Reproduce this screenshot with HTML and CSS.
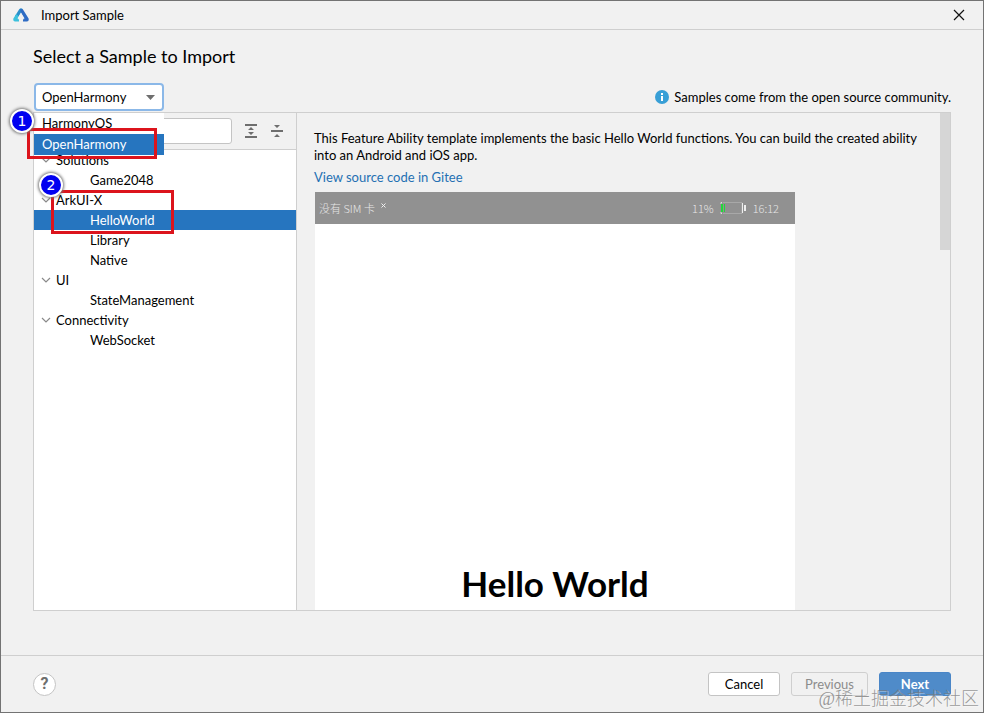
FILE: index.html
```html
<!DOCTYPE html>
<html lang="en">
<head>
<meta charset="utf-8">
<title>Import Sample</title>
<link rel="stylesheet" href="styles.css">
</head>
<body>
<div class="window">
  <header class="titlebar">
    <svg class="logo" width="16" height="14" viewBox="0 0 16 14" aria-hidden="true">
      <path d="M6.2 1.2Q8 -0.8 9.8 1.2L8 5L5.4 9L2 8Z" fill="#2a8fcb"/>
      <path d="M9.8 1.2L15.6 10.6Q16.2 13.4 14 13.6H10V11.2H11.2L8 5L7 1Z" fill="#2f6cc4"/>
      <path d="M0.4 10.6L3.2 6L6 8.4L4.8 11.2H6V13.6H2Q-0.2 13.4 0.4 10.6Z" fill="#3cc0dc"/>
      <path d="M8 4.4L11.6 10.6H9.4V13.6H6.6V10.6H4.4Z" fill="#f1f1f1"/>
    </svg>
    <span class="title">Import Sample</span>
    <button class="close" aria-label="Close">
      <svg width="12" height="12" viewBox="0 0 12 12"><path d="M1 1L11 11M11 1L1 11" stroke="#111" stroke-width="1.2" fill="none"/></svg>
    </button>
  </header>

  <main class="content">
    <h1>Select a Sample to Import</h1>
    <div class="filter">
      <div class="combo">
        <select aria-label="Platform">
          <option>HarmonyOS</option>
          <option selected>OpenHarmony</option>
        </select>
        <svg class="caret" width="9" height="5" viewBox="0 0 9 5"><path d="M0 0H9L4.5 5Z" fill="#6e6e6e"/></svg>
        <div class="popup">
          <ul role="listbox" aria-label="Platform">
            <li role="option">HarmonyOS</li>
            <li role="option" aria-selected="true" class="selected">OpenHarmony</li>
          </ul>
          <span class="mark mark-one"></span>
          <span class="badge badge-one">1</span>
        </div>
      </div>
      <p class="note">
        <svg width="14" height="14" viewBox="0 0 14 14" aria-hidden="true"><circle cx="7" cy="7" r="7" fill="#389fd6"/><rect x="6" y="3" width="2" height="2" fill="#fff"/><rect x="6" y="6" width="2" height="5" fill="#fff"/></svg>
        <span>Samples come from the open source community.</span>
      </p>
    </div>

    <div class="panes">
      <section class="sidebar">
        <div class="tools">
          <input class="search" type="text" aria-label="Search">
          <button aria-label="Expand all">
            <svg width="14" height="14" viewBox="0 0 14 14"><path d="M1 0H13V2H1ZM1 12H13V14H1ZM7 3L10 6H4ZM7 11L4 8H10Z" fill="#6e6e6e"/></svg>
          </button>
          <button aria-label="Collapse all">
            <svg width="14" height="14" viewBox="0 0 14 14"><path d="M1 6H13V8H1ZM4 1H10L7 4ZM4 13H10L7 10Z" fill="#6e6e6e"/></svg>
          </button>
        </div>
        <ul class="tree" role="tree">
          <li class="group" role="treeitem"><svg width="10" height="6" viewBox="0 0 10 6"><path d="M1 1L5 5L9 1"/></svg>Solutions</li>
          <li class="leaf" role="treeitem">Game2048</li>
          <li class="group" role="treeitem"><svg width="10" height="6" viewBox="0 0 10 6"><path d="M1 1L5 5L9 1"/></svg>ArkUI-X</li>
          <li class="leaf selected" role="treeitem" aria-selected="true">HelloWorld<span class="mark mark-two"></span><span class="badge badge-two">2</span></li>
          <li class="leaf" role="treeitem">Library</li>
          <li class="leaf" role="treeitem">Native</li>
          <li class="group" role="treeitem"><svg width="10" height="6" viewBox="0 0 10 6"><path d="M1 1L5 5L9 1"/></svg>UI</li>
          <li class="leaf" role="treeitem">StateManagement</li>
          <li class="group" role="treeitem"><svg width="10" height="6" viewBox="0 0 10 6"><path d="M1 1L5 5L9 1"/></svg>Connectivity</li>
          <li class="leaf" role="treeitem">WebSocket</li>
        </ul>
      </section>

      <section class="detail">
        <div class="info">
          <p>This Feature Ability template implements the basic Hello World functions. You can build the created ability into an Android and iOS app.</p>
          <a href="#source">View source code in Gitee</a>
          <div class="phone">
            <div class="status">
              <span>没有 SIM 卡</span>
              <svg class="nosignal" width="5" height="5" viewBox="0 0 5 5"><path d="M0.5 0.5L4.5 4.5M4.5 0.5L0.5 4.5" stroke="#f0f0f0" fill="none"/></svg>
              <span class="percent">11%</span>
              <svg width="27" height="14" viewBox="0 0 27 14"><path d="M3 1.5H22V12.5H3" stroke="#a8a8a8" fill="none"/><path d="M2 1.5H1V3M1 11V12.5H2" stroke="#ddd" fill="none"/><path d="M22 2H23V12H22ZM24 4H26V10H24Z" fill="#eee"/><path d="M1 3H3V11H1ZM4 3H5V11H4Z" fill="#22d83a"/></svg>
              <span>16:12</span>
            </div>
            <div class="screen">Hello World</div>
          </div>
        </div>
        <div class="scrollbar"><div class="thumb"></div></div>
      </section>
    </div>
  </main>

  <footer class="footer">
    <button class="help" aria-label="Help">?</button>
    <div class="actions">
      <button class="btn">Cancel</button>
      <button class="btn previous" disabled>Previous</button>
      <button class="btn next">Next</button>
    </div>
    <span class="watermark">@稀土掘金技术社区</span>
  </footer>
</div>
</body>
</html>
```
FILE: styles.css
```css
* { box-sizing: border-box; }

body {
  margin: 0;
  height: 100vh;
  padding: 0 1px 2px 0;
  background: #fff;
  color: #000;
  font: 13px/17px Lato, "Noto Sans CJK SC", sans-serif;
}

button, input, select { font: inherit; color: inherit; }
h1, p, ul { margin: 0; padding: 0; }
ul { list-style: none; }
svg { display: block; flex: none; }

.window {
  display: flex;
  flex-direction: column;
  height: 100%;
  border: 1px solid #737373;
  background: #f1f1f1;
}

.titlebar {
  display: flex;
  align-items: center;
  height: 29px;
  padding: 0 18px 0 12px;
  border-bottom: 1px solid #cfcfcf;
}
.title { margin-left: 12px; }
.close {
  margin-left: auto;
  padding: 0;
  border: 0;
  background: none;
}

.content {
  display: flex;
  flex: 1;
  flex-direction: column;
  min-height: 0;
  padding: 14px 32px 44px;
}
h1 { font-size: 18px; line-height: 24px; font-weight: 400; }

.filter {
  display: flex;
  align-items: center;
  justify-content: space-between;
  height: 28px;
  margin: 15px 0 1px;
}
.combo { position: relative; width: 130px; margin-left: 1px; }
.combo select {
  display: block;
  appearance: none;
  width: 100%;
  height: 28px;
  padding: 0 6px;
  border: 2px solid #8bb8e8;
  border-radius: 4px;
  outline: 0;
  background: #fff;
}
.caret { position: absolute; right: 9px; top: 12px; }
.popup {
  position: absolute;
  z-index: 2;
  top: 30px;
  left: -1px;
  width: 131px;
  border-left: 1px solid #cfcfcf;
  background: #fff;
}
.popup li { padding: 2px 8px; }
.popup .selected, .tree .selected { background: #2675bf; color: #fff; }

.note { display: flex; align-items: center; gap: 5px; }

.mark {
  position: absolute;
  border: 3px solid #dc141c;
}
.mark-one { left: -7px; top: 15px; width: 130px; height: 31px; }
.mark-two { left: 17px; top: -20px; width: 123px; height: 44px; }
.badge {
  position: absolute;
  width: 24px;
  height: 24px;
  border: 2px solid #fff;
  border-radius: 50%;
  background: #0000f0;
  box-shadow: 0 0 3px 1px #777;
  color: #fff;
  font: 14px/20px "DejaVu Sans", sans-serif;
  text-align: center;
}
.badge-one { left: -24px; top: -4px; }
.badge-two { left: 5px; top: -37px; }

.panes {
  display: flex;
  flex: 1;
  min-height: 0;
  border: 1px solid #cfcfcf;
}
.sidebar {
  display: flex;
  flex: none;
  flex-direction: column;
  width: 263px;
  border-right: 1px solid #cfcfcf;
  background: #fff;
}
.tools {
  display: flex;
  align-items: center;
  gap: 12px;
  height: 37px;
  padding: 0 12px 0 8px;
  border-bottom: 1px solid #cfcfcf;
  background: #f1f1f1;
}
.tools button { padding: 0; border: 0; background: none; }
.search {
  flex: 1;
  min-width: 0;
  height: 26px;
  border: 1px solid #c4c4c4;
  border-radius: 3px;
  background: #fff;
}
.tree li {
  position: relative;
  display: flex;
  align-items: center;
  height: 20px;
}
.tree .group { gap: 5px; padding-left: 7px; }
.tree .leaf { padding-left: 56px; }
.tree path { fill: none; stroke: #8a8a8a; stroke-width: 1.2; }

.detail { display: flex; flex: 1; min-width: 0; overflow: hidden; }
.info { flex: 1; min-width: 0; padding: 17px 8px 0 17px; overflow: hidden; }
.info a {
  display: block;
  margin-top: 5px;
  color: #2470b3;
  text-decoration: none;
}
.phone { width: 480px; margin: 6px 0 0 1px; background: #fff; }
.status {
  display: flex;
  align-items: center;
  gap: 6px;
  height: 32px;
  padding: 0 16px 0 4px;
  background: #919191;
  color: #e6e6e6;
  font: 300 11px/16px "Noto Sans CJK SC", sans-serif;
}
.nosignal { margin-bottom: 6px; }
.percent { margin-left: auto; }
.screen {
  height: 800px;
  padding-top: 337px;
  font: 700 35px/44px Lato, sans-serif;
  text-align: center;
}
.scrollbar { width: 10px; }
.thumb { height: 137px; background: #d6d6d6; }

.footer {
  position: relative;
  display: flex;
  align-items: center;
  justify-content: space-between;
  height: 57px;
  padding: 0 32px;
  border-top: 1px solid #cfcfcf;
}
.help {
  width: 23px;
  height: 23px;
  padding: 0;
  border: 1px solid #c4c4c4;
  border-radius: 50%;
  background: #fff;
  color: #6e6e6e;
  font: 700 16px/20px Roboto, sans-serif;
}
.actions { display: flex; gap: 11px; }
.btn {
  min-width: 72px;
  height: 24px;
  padding: 0 12px;
  border: 1px solid #c4c4c4;
  border-radius: 3px;
  background: #fff;
}
.previous { min-width: 77px; border-color: #cfcfcf; background: #f1f1f1; color: #8c8c8c; }
.next { border-color: #4a86c7; background: #4f8bc9; color: #fff; font-weight: 700; }
.watermark {
  position: absolute;
  right: 4px;
  bottom: 1px;
  color: rgba(120, 120, 120, 0.75);
  font: 300 18px/24px "Liberation Serif", "Noto Sans CJK SC", serif;
  text-shadow: 1px 1px 0 rgba(255, 255, 255, 0.4);
}
```
